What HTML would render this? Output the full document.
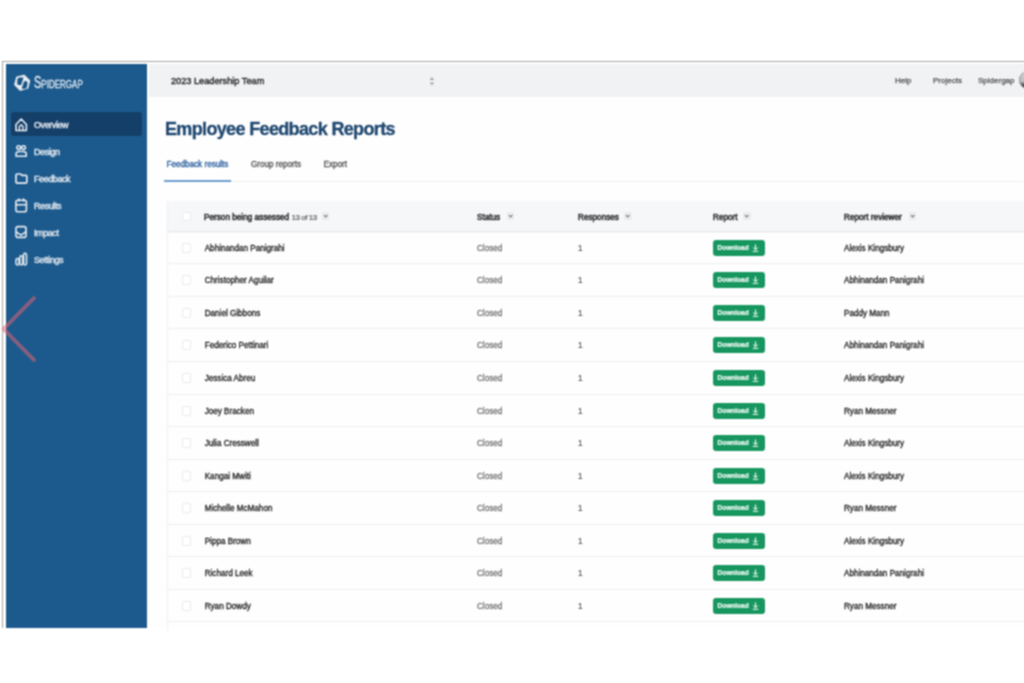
<!DOCTYPE html>
<html><head><meta charset="utf-8">
<style>
*{box-sizing:border-box;margin:0;padding:0}
html,body{width:1024px;height:683px;overflow:hidden;background:#fff;font-family:"Liberation Sans",sans-serif}
.frame{position:absolute;left:2px;top:61px;width:1030px;height:566.5px;border-top:1px solid #a4a4a4;border-left:1px solid #a4a4a4}
.side{position:absolute;left:6px;top:64px;width:141px;height:563.5px;background:#1c5a8d}
.hdr{position:absolute;left:149px;top:64px;width:881px;height:33px;background:#f0f2f4}
.main{position:absolute;left:149px;top:97px;width:881px;height:530.5px;background:#fefefe}
.logo{position:absolute;left:8px;top:9px}
.brand{position:absolute;left:28px;top:9px;color:#e3e9f0;font-size:11.8px;transform:scaleX(0.68);transform-origin:0 0;-webkit-text-stroke:0.3px #e3e9f0;white-space:nowrap}
.brand b{font-size:16.2px;font-weight:normal}
.nav{position:absolute;left:5px;width:131px;height:23px;border-radius:3px;color:#dce3eb;font-size:9px;letter-spacing:-0.42px;-webkit-text-stroke:0.45px #dce3eb}
.nav.act{background:#143f69}
.nav span{position:absolute;left:23px;top:7.5px}
.nav svg{position:absolute;left:4px;top:5px}
.team{position:absolute;left:22px;top:11.5px;font-size:9.2px;color:#2a2a2a;-webkit-text-stroke:0.4px #2a2a2a}
.updown{position:absolute;left:280px;top:11px}
.hlinks{position:absolute;top:12px;font-size:8px;color:#505050;-webkit-text-stroke:0.25px #505050}
.avatar{position:absolute;left:870px;top:7px;width:18px;height:18px;border-radius:50%;background:linear-gradient(#d8d8d8 0%,#bdbdbd 60%,#555 75%,#444 100%);box-shadow:inset 1px 0 1px #999}
h1{position:absolute;left:16px;top:21.6px;font-size:18px;font-weight:bold;color:#1f4870;letter-spacing:-0.65px;-webkit-text-stroke:0.35px #1f4870}
.tab{position:absolute;top:63px;font-size:8.15px;color:#555;-webkit-text-stroke:0.3px #555}
.tab.act{color:#2f62a0;-webkit-text-stroke:0.35px #2f62a0}
.tabline{position:absolute;left:15px;top:84.3px;width:860px;height:1px;background:#eeeeee}
.tabul{position:absolute;left:15px;top:83.3px;width:67px;height:2px;background:#6d9dcb}
.tbl{position:absolute;left:19px;top:104px;width:860px;height:430px;box-shadow:-1px 0 0 #f0f0f0}
.th{position:absolute;left:0;top:0;width:860px;height:30.5px;background:#f6f7f9;border-bottom:1px solid #e6e7e9;box-shadow:0 1px 1px rgba(0,0,0,0.03)}
.row{position:absolute;left:0;width:860px;height:32.6px;border-bottom:1px solid #eeeeee}
.cb{position:absolute;left:14px;width:9px;height:9px;border:1px solid #ebebeb;border-radius:2px;background:#fff}
.c{position:absolute;font-size:8.15px;color:#1c1c1c;white-space:nowrap;-webkit-text-stroke:0.3px #1c1c1c}
.hc{position:absolute;font-size:8.2px;color:#333;white-space:nowrap;-webkit-text-stroke:0.55px #333}
.dd{position:absolute;width:7.5px;height:8px;background:#ebecee;border-radius:1px}
.dd:after{content:"";position:absolute;left:2.3px;top:1.8px;width:2.4px;height:2.4px;border-right:1.2px solid #707070;border-bottom:1.2px solid #707070;transform:rotate(45deg)}
.c.one{color:#555;-webkit-text-stroke:0.2px #555}
.c.st{color:#747474;-webkit-text-stroke:0.3px #747474}
.btn{position:absolute;left:544.6px;width:52px;height:16px;background:#17975f;border-radius:3px;color:#fff;font-size:6.5px;font-weight:bold;-webkit-text-stroke:0.15px #fff}
.btn span{position:absolute;left:5px;top:4.5px}
.chev{position:absolute;left:0;top:0}
</style></head><body>
<svg width="0" height="0" style="position:absolute"><filter id="soft" color-interpolation-filters="sRGB" x="0" y="0" width="100%" height="100%"><feConvolveMatrix order="3" kernelMatrix="1 2 1 2 4 2 1 2 1" divisor="16" edgeMode="duplicate"/></filter></svg>
<div id="wrap" style="position:absolute;left:0;top:0;width:1030px;height:683px;background:#fff;filter:url(#soft)">
<div class="frame"></div>
<div class="side">
    <div class="brand"><b>S</b>PIDERGAP</div>
  <div class="nav act" style="top:48.4px;height:23.4px"><span>Overview</span></div>
  <div class="nav" style="top:75.5px"><span>Design</span></div>
  <div class="nav" style="top:102.5px"><span>Feedback</span></div>
  <div class="nav" style="top:129px"><span>Results</span></div>
  <div class="nav" style="top:156px"><span>Impact</span></div>
  <div class="nav" style="top:183px"><span>Settings</span></div>
  <svg style="position:absolute;left:0;top:0" width="141" height="564" viewBox="6 64 141 564">
    <g fill="none" stroke="#e6ecf2" stroke-linejoin="round" stroke-linecap="round">
      <path d="M24.12 75.55 L29.35 80.78 L27.43 87.93 L20.28 89.85 L15.05 84.62 L16.97 77.47 Z" stroke-width="1.8" fill="#e6ecf2"/>
      <path d="M17.4 79.6 Q17.8 77.6 19.8 77.5 L23.5 77.6 L21.2 84.9 L18.2 84.9 Q17.2 84.6 17.2 83.2 Z" fill="#1a5487" stroke="none"/>
      <path d="M24.1 81.2 L26.8 81.2 Q27.6 81.6 27.5 83.2 L27 86.9 Q26.4 88.8 24.4 88.8 L21.6 88.7 Z" fill="#1a5487" stroke="none"/>
      <path d="M16 124.5 L21.2 119 L26.4 124.5 V130.5 H16 Z" stroke-width="1.6"/>
      <path d="M19.4 130.5 V126.6 L21.2 124.8 L23 126.6 V130.5" stroke-width="1.4"/>
      <circle cx="18.7" cy="147.6" r="1.9" stroke-width="1.5"/>
      <circle cx="23.6" cy="147.6" r="1.9" stroke-width="1.5"/>
      <path d="M16 156.2 V154.5 Q16 151.6 19 151.6 H23.3 Q26.3 151.6 26.3 154.5 V156.2 Z" stroke-width="1.5"/>
      <path d="M16 175.2 Q16 174 17.2 174 H20.6 L22 175.4 H25.6 Q26.8 175.4 26.8 176.6 V182 Q26.8 183.2 25.6 183.2 H17.2 Q16 183.2 16 182 Z" stroke-width="1.7"/>
      <rect x="15.9" y="200.2" width="10.5" height="11.6" rx="2" stroke-width="1.6"/>
      <path d="M18.8 199 V201 M23.5 199 V201 M16 204.8 H26.3" stroke-width="1.6"/>
      <rect x="16" y="226.6" width="10" height="10.8" rx="2" stroke-width="1.6"/>
      <path d="M16.2 231.8 L21 235.2 L25.8 231.8" stroke-width="1.5"/>
      <rect x="16" y="258.6" width="2.9" height="6.3" rx="1.4" stroke-width="1.5"/>
      <rect x="19.8" y="255.8" width="2.9" height="9.1" rx="1.4" stroke-width="1.5"/>
      <rect x="23.6" y="253.3" width="2.9" height="11.6" rx="1.4" stroke-width="1.5"/>
    </g>
  </svg>
</div>
<svg style="position:absolute;left:0;top:295px" width="40" height="70" viewBox="0 0 40 70"><path d="M34 3 L3.5 34 L34 65" fill="none" stroke="rgba(228,100,112,0.55)" stroke-width="3.8" stroke-linecap="round" stroke-linejoin="round"/></svg>
<div class="hdr">
  <div class="team">2023 Leadership Team</div>
  <svg class="updown" width="6" height="12" viewBox="0 0 6 12"><path d="M0.6 4.9 L2.9 2.2 L5.2 4.9 Z M0.6 7.6 L2.9 10.3 L5.2 7.6 Z" fill="#a0a0a0"/></svg>
  <div class="hlinks" style="left:746px">Help</div>
  <div class="hlinks" style="left:784px">Projects</div>
  <div class="hlinks" style="left:829px">Spidergap</div>
  <div class="avatar"></div>
</div>
<div class="main">
  <h1>Employee Feedback Reports</h1>
  <div class="tab act" style="left:17.5px">Feedback results</div>
  <div class="tab" style="left:102px">Group reports</div>
  <div class="tab" style="left:174.5px">Export</div>
  <div class="tabline"></div>
  <div class="tabul"></div>
  <div class="tbl" id="tbl">
    <div class="th">
      <div class="cb" style="top:11px"></div>
      <div class="hc" style="left:36px;top:11.6px">Person being assessed <span style="color:#5c5c5c;font-size:8px;letter-spacing:-0.45px;-webkit-text-stroke:0.2px #5c5c5c">13 of 13</span></div>
      <div class="dd" style="left:153.5px;top:11px"></div>
      <div class="hc" style="left:309px;top:11.6px">Status</div>
      <div class="dd" style="left:338.6px;top:11px"></div>
      <div class="hc" style="left:410px;top:11.6px">Responses</div>
      <div class="dd" style="left:456px;top:11px"></div>
      <div class="hc" style="left:545px;top:11.6px">Report</div>
      <div class="dd" style="left:575px;top:11px"></div>
      <div class="hc" style="left:676px;top:11.6px">Report reviewer</div>
      <div class="dd" style="left:740.5px;top:11px"></div>
    </div>
<!--BEGINROWLIST-->
    <div class="row" style="top:31px;height:32px">
      <div class="cb" style="top:10.6px;height:10px"></div>
      <div class="c" style="left:36.7px;top:11.7px">Abhinandan Panigrahi</div>
      <div class="c st" style="left:309px;top:11.7px">Closed</div>
      <div class="c one" style="left:410px;top:11.7px">1</div>
      <div class="btn" style="top:7.5px"><span>Download</span><svg style="position:absolute;left:39.6px;top:4.2px" width="7" height="8" viewBox="0 0 7 8"><path d="M3.5 0.5 V5.5 M1.2 3.5 L3.5 5.8 L5.8 3.5 M0.8 7.3 H6.2" fill="none" stroke="#fff" stroke-width="1"/></svg></div>
      <div class="c" style="left:676px;top:11.7px">Alexis Kingsbury</div>
    </div>
    <div class="row" style="top:63px;height:33px">
      <div class="cb" style="top:10.6px;height:10px"></div>
      <div class="c" style="left:36.7px;top:11.7px">Christopher Aguilar</div>
      <div class="c st" style="left:309px;top:11.7px">Closed</div>
      <div class="c one" style="left:410px;top:11.7px">1</div>
      <div class="btn" style="top:7.5px"><span>Download</span><svg style="position:absolute;left:39.6px;top:4.2px" width="7" height="8" viewBox="0 0 7 8"><path d="M3.5 0.5 V5.5 M1.2 3.5 L3.5 5.8 L5.8 3.5 M0.8 7.3 H6.2" fill="none" stroke="#fff" stroke-width="1"/></svg></div>
      <div class="c" style="left:676px;top:11.7px">Abhinandan Panigrahi</div>
    </div>
    <div class="row" style="top:96px;height:32px">
      <div class="cb" style="top:10.6px;height:10px"></div>
      <div class="c" style="left:36.7px;top:11.7px">Daniel Gibbons</div>
      <div class="c st" style="left:309px;top:11.7px">Closed</div>
      <div class="c one" style="left:410px;top:11.7px">1</div>
      <div class="btn" style="top:7.5px"><span>Download</span><svg style="position:absolute;left:39.6px;top:4.2px" width="7" height="8" viewBox="0 0 7 8"><path d="M3.5 0.5 V5.5 M1.2 3.5 L3.5 5.8 L5.8 3.5 M0.8 7.3 H6.2" fill="none" stroke="#fff" stroke-width="1"/></svg></div>
      <div class="c" style="left:676px;top:11.7px">Paddy Mann</div>
    </div>
    <div class="row" style="top:128px;height:33px">
      <div class="cb" style="top:10.6px;height:10px"></div>
      <div class="c" style="left:36.7px;top:11.7px">Federico Pettinari</div>
      <div class="c st" style="left:309px;top:11.7px">Closed</div>
      <div class="c one" style="left:410px;top:11.7px">1</div>
      <div class="btn" style="top:7.5px"><span>Download</span><svg style="position:absolute;left:39.6px;top:4.2px" width="7" height="8" viewBox="0 0 7 8"><path d="M3.5 0.5 V5.5 M1.2 3.5 L3.5 5.8 L5.8 3.5 M0.8 7.3 H6.2" fill="none" stroke="#fff" stroke-width="1"/></svg></div>
      <div class="c" style="left:676px;top:11.7px">Abhinandan Panigrahi</div>
    </div>
    <div class="row" style="top:161px;height:33px">
      <div class="cb" style="top:10.6px;height:10px"></div>
      <div class="c" style="left:36.7px;top:11.7px">Jessica Abreu</div>
      <div class="c st" style="left:309px;top:11.7px">Closed</div>
      <div class="c one" style="left:410px;top:11.7px">1</div>
      <div class="btn" style="top:7.5px"><span>Download</span><svg style="position:absolute;left:39.6px;top:4.2px" width="7" height="8" viewBox="0 0 7 8"><path d="M3.5 0.5 V5.5 M1.2 3.5 L3.5 5.8 L5.8 3.5 M0.8 7.3 H6.2" fill="none" stroke="#fff" stroke-width="1"/></svg></div>
      <div class="c" style="left:676px;top:11.7px">Alexis Kingsbury</div>
    </div>
    <div class="row" style="top:194px;height:32px">
      <div class="cb" style="top:10.6px;height:10px"></div>
      <div class="c" style="left:36.7px;top:11.7px">Joey Bracken</div>
      <div class="c st" style="left:309px;top:11.7px">Closed</div>
      <div class="c one" style="left:410px;top:11.7px">1</div>
      <div class="btn" style="top:7.5px"><span>Download</span><svg style="position:absolute;left:39.6px;top:4.2px" width="7" height="8" viewBox="0 0 7 8"><path d="M3.5 0.5 V5.5 M1.2 3.5 L3.5 5.8 L5.8 3.5 M0.8 7.3 H6.2" fill="none" stroke="#fff" stroke-width="1"/></svg></div>
      <div class="c" style="left:676px;top:11.7px">Ryan Messner</div>
    </div>
    <div class="row" style="top:226px;height:33px">
      <div class="cb" style="top:10.6px;height:10px"></div>
      <div class="c" style="left:36.7px;top:11.7px">Julia Cresswell</div>
      <div class="c st" style="left:309px;top:11.7px">Closed</div>
      <div class="c one" style="left:410px;top:11.7px">1</div>
      <div class="btn" style="top:7.5px"><span>Download</span><svg style="position:absolute;left:39.6px;top:4.2px" width="7" height="8" viewBox="0 0 7 8"><path d="M3.5 0.5 V5.5 M1.2 3.5 L3.5 5.8 L5.8 3.5 M0.8 7.3 H6.2" fill="none" stroke="#fff" stroke-width="1"/></svg></div>
      <div class="c" style="left:676px;top:11.7px">Alexis Kingsbury</div>
    </div>
    <div class="row" style="top:259px;height:32px">
      <div class="cb" style="top:10.6px;height:10px"></div>
      <div class="c" style="left:36.7px;top:11.7px">Kangai Mwiti</div>
      <div class="c st" style="left:309px;top:11.7px">Closed</div>
      <div class="c one" style="left:410px;top:11.7px">1</div>
      <div class="btn" style="top:7.5px"><span>Download</span><svg style="position:absolute;left:39.6px;top:4.2px" width="7" height="8" viewBox="0 0 7 8"><path d="M3.5 0.5 V5.5 M1.2 3.5 L3.5 5.8 L5.8 3.5 M0.8 7.3 H6.2" fill="none" stroke="#fff" stroke-width="1"/></svg></div>
      <div class="c" style="left:676px;top:11.7px">Alexis Kingsbury</div>
    </div>
    <div class="row" style="top:291px;height:33px">
      <div class="cb" style="top:10.6px;height:10px"></div>
      <div class="c" style="left:36.7px;top:11.7px">Michelle McMahon</div>
      <div class="c st" style="left:309px;top:11.7px">Closed</div>
      <div class="c one" style="left:410px;top:11.7px">1</div>
      <div class="btn" style="top:7.5px"><span>Download</span><svg style="position:absolute;left:39.6px;top:4.2px" width="7" height="8" viewBox="0 0 7 8"><path d="M3.5 0.5 V5.5 M1.2 3.5 L3.5 5.8 L5.8 3.5 M0.8 7.3 H6.2" fill="none" stroke="#fff" stroke-width="1"/></svg></div>
      <div class="c" style="left:676px;top:11.7px">Ryan Messner</div>
    </div>
    <div class="row" style="top:324px;height:32px">
      <div class="cb" style="top:10.6px;height:10px"></div>
      <div class="c" style="left:36.7px;top:11.7px">Pippa Brown</div>
      <div class="c st" style="left:309px;top:11.7px">Closed</div>
      <div class="c one" style="left:410px;top:11.7px">1</div>
      <div class="btn" style="top:7.5px"><span>Download</span><svg style="position:absolute;left:39.6px;top:4.2px" width="7" height="8" viewBox="0 0 7 8"><path d="M3.5 0.5 V5.5 M1.2 3.5 L3.5 5.8 L5.8 3.5 M0.8 7.3 H6.2" fill="none" stroke="#fff" stroke-width="1"/></svg></div>
      <div class="c" style="left:676px;top:11.7px">Alexis Kingsbury</div>
    </div>
    <div class="row" style="top:356px;height:33px">
      <div class="cb" style="top:10.6px;height:10px"></div>
      <div class="c" style="left:36.7px;top:11.7px">Richard Leek</div>
      <div class="c st" style="left:309px;top:11.7px">Closed</div>
      <div class="c one" style="left:410px;top:11.7px">1</div>
      <div class="btn" style="top:7.5px"><span>Download</span><svg style="position:absolute;left:39.6px;top:4.2px" width="7" height="8" viewBox="0 0 7 8"><path d="M3.5 0.5 V5.5 M1.2 3.5 L3.5 5.8 L5.8 3.5 M0.8 7.3 H6.2" fill="none" stroke="#fff" stroke-width="1"/></svg></div>
      <div class="c" style="left:676px;top:11.7px">Abhinandan Panigrahi</div>
    </div>
    <div class="row" style="top:389px;height:32px">
      <div class="cb" style="top:10.6px;height:10px"></div>
      <div class="c" style="left:36.7px;top:11.7px">Ryan Dowdy</div>
      <div class="c st" style="left:309px;top:11.7px">Closed</div>
      <div class="c one" style="left:410px;top:11.7px">1</div>
      <div class="btn" style="top:7.5px"><span>Download</span><svg style="position:absolute;left:39.6px;top:4.2px" width="7" height="8" viewBox="0 0 7 8"><path d="M3.5 0.5 V5.5 M1.2 3.5 L3.5 5.8 L5.8 3.5 M0.8 7.3 H6.2" fill="none" stroke="#fff" stroke-width="1"/></svg></div>
      <div class="c" style="left:676px;top:11.7px">Ryan Messner</div>
    </div>
<!--ENDROWLIST-->
  </div>
</div>
</div>
</body></html>
